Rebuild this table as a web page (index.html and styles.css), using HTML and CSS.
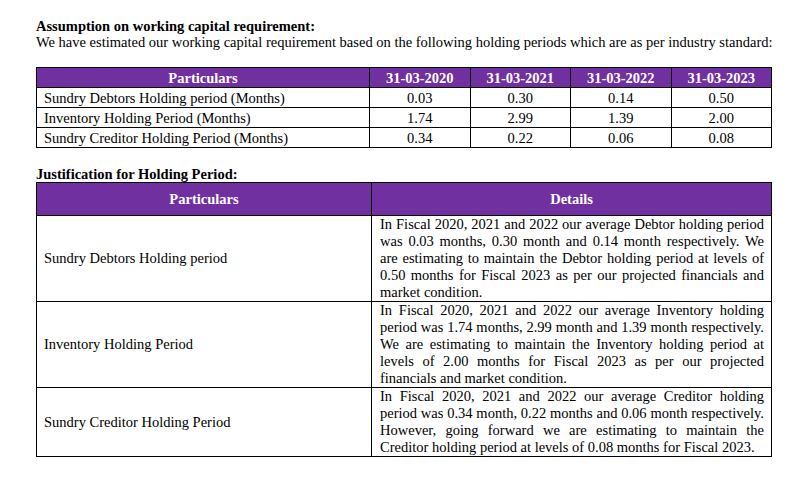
FILE: index.html
```html
<!DOCTYPE html>
<html>
<head>
<meta charset="utf-8">
<link rel="stylesheet" href="styles.css">
</head>
<body>
<div class="page">
  <h2 class="heading">Assumption on working capital requirement:</h2>
  <p class="intro">We have estimated our working capital requirement based on the following holding periods which are as per industry standard:</p>

  <table class="grid periods">
    <colgroup>
      <col class="c-part"><col class="c-yr"><col class="c-yr"><col class="c-yr"><col class="c-yr">
    </colgroup>
    <thead>
      <tr><th>Particulars</th><th>31-03-2020</th><th>31-03-2021</th><th>31-03-2022</th><th>31-03-2023</th></tr>
    </thead>
    <tbody>
      <tr><td class="label">Sundry Debtors Holding period (Months)</td><td>0.03</td><td>0.30</td><td>0.14</td><td>0.50</td></tr>
      <tr><td class="label">Inventory Holding Period (Months)</td><td>1.74</td><td>2.99</td><td>1.39</td><td>2.00</td></tr>
      <tr><td class="label">Sundry Creditor Holding Period (Months)</td><td>0.34</td><td>0.22</td><td>0.06</td><td>0.08</td></tr>
    </tbody>
  </table>

  <h2 class="heading heading-2">Justification for Holding Period:</h2>
  <table class="grid just">
    <colgroup>
      <col class="c-jpart"><col class="c-det">
    </colgroup>
    <thead>
      <tr><th>Particulars</th><th>Details</th></tr>
    </thead>
    <tbody>
      <tr class="r1">
        <td class="label">Sundry Debtors Holding period</td>
        <td class="det">In Fiscal 2020, 2021 and 2022 our average Debtor holding period was 0.03 months, 0.30 month and 0.14 month respectively. We are estimating to maintain the Debtor holding period at levels of 0.50 months for Fiscal 2023 as per our projected financials and market condition.</td>
      </tr>
      <tr class="r2">
        <td class="label">Inventory Holding Period</td>
        <td class="det">In Fiscal 2020, 2021 and 2022 our average Inventory holding period was 1.74 months, 2.99 month and 1.39 month respectively. We are estimating to maintain the Inventory holding period at levels of 2.00 months for Fiscal 2023 as per our projected financials and market condition.</td>
      </tr>
      <tr class="r3">
        <td class="label">Sundry Creditor Holding Period</td>
        <td class="det">In Fiscal 2020, 2021 and 2022 our average Creditor holding period was 0.34 month, 0.22 months and 0.06 month respectively. However, going forward we are estimating to maintain the Creditor holding period at levels of 0.08 months for Fiscal 2023.</td>
      </tr>
    </tbody>
  </table>
</div>
</body>
</html>
```

FILE: styles.css
```css
html, body {
  margin: 0;
  padding: 0;
  background: #ffffff;
}

.page {
  width: 735px;
  padding: 18px 0 0 36px;
  font-family: "Liberation Serif", "Times New Roman", serif;
  font-size: 14.5px;
  color: #000000;
}

.heading {
  font-size: 14.5px;
  font-weight: bold;
  margin: 0;
  line-height: 16px;
}

.intro {
  margin: 0;
  line-height: 16px;
  white-space: nowrap;
}

.heading-2 {
  margin-top: 18px;
  line-height: 16px;
}

.grid {
  width: 735px;
  border-collapse: collapse;
  table-layout: fixed;
}

.grid th,
.grid td {
  border: 1px solid #000000;
  padding: 0;
}

.grid th {
  background: #7030a0;
  color: #ffffff;
  font-weight: bold;
  text-align: center;
}

.periods {
  margin-top: 17px;
}

.periods th,
.periods td {
  height: 19px;
  line-height: 16px;
  text-align: center;
}

.periods td.label {
  text-align: left;
  padding-left: 7px;
}

.c-part { width: 333px; }
.c-yr { width: 100.5px; }

.c-jpart { width: 335px; }
.c-det { width: 400px; }

.just th {
  height: 32px;
  line-height: 16px;
}

.just td {
  line-height: 17px;
  vertical-align: middle;
}

.just td.label {
  padding-left: 7px;
}

.just td.det {
  padding: 0 7px 0 8px;
  text-align: justify;
}
```
